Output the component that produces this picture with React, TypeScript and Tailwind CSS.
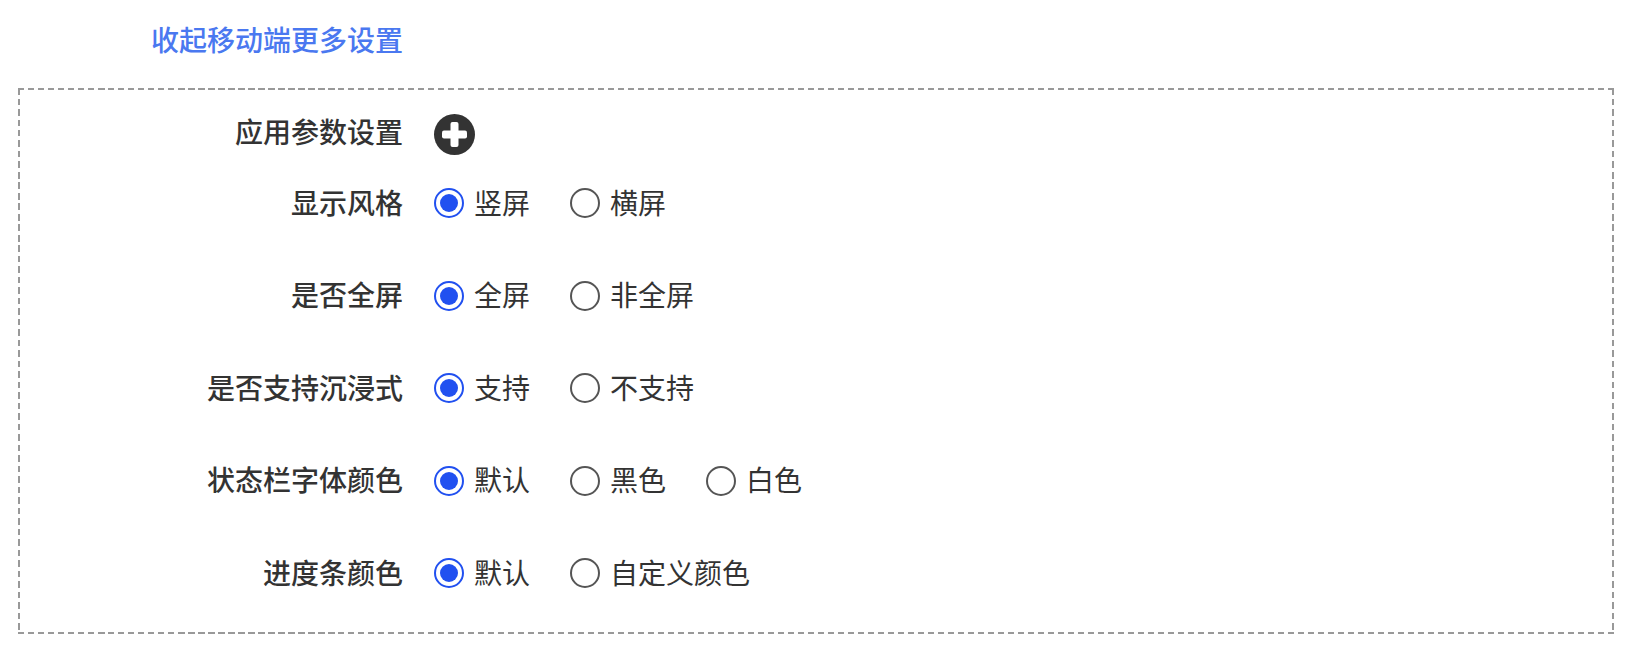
const rows = [
  { label: "显示风格", options: ["竖屏", "横屏"] },
  { label: "是否全屏", options: ["全屏", "非全屏"] },
  { label: "是否支持沉浸式", options: ["支持", "不支持"] },
  { label: "状态栏字体颜色", options: ["默认", "黑色", "白色"] },
  { label: "进度条颜色", options: ["默认", "自定义颜色"] },
];

function Radio({ checked, text }: { checked: boolean; text: string }) {
  return (
    <label className="mr-[40px] flex items-center gap-[10px] text-[#333]">
      <span
        className={
          checked
            ? "flex h-[30px] w-[30px] items-center justify-center rounded-full border-2 border-[#2150f0] bg-white"
            : "flex h-[30px] w-[30px] items-center justify-center rounded-full border-2 border-[#555] bg-white"
        }
      >
        {checked && <span className="h-[18px] w-[18px] rounded-full bg-[#2150f0]" />}
      </span>
      <span className="pb-[3px]">{text}</span>
    </label>
  );
}

export default function App() {
  return (
    <div
      className="h-[650px] w-[1632px] bg-white pt-[18px] text-[28px] leading-[42px]"
      style={{ fontFamily: '"Noto Sans CJK SC", "Noto Sans", sans-serif' }}
    >
      <div className="pl-[151px] font-medium text-[#4a78f0]">收起移动端更多设置</div>
      {/* dash pattern of the border is longer than what border-dashed gives */}
      <div className="ml-[18px] mt-[28px] h-[546px] w-[1596px] pl-[2px] pt-[23px] [background:repeating-linear-gradient(90deg,#999_0_6.5px,transparent_6.5px_10px)_top/100%_2px_no-repeat,repeating-linear-gradient(90deg,#999_0_6.5px,transparent_6.5px_10px)_bottom/100%_2px_no-repeat,repeating-linear-gradient(180deg,#999_0_6.5px,transparent_6.5px_10.5px)_left/2px_100%_no-repeat,repeating-linear-gradient(180deg,#999_0_6.5px,transparent_6.5px_10.5px)_right/2px_100%_no-repeat]">
        <div className="flex h-[42px] items-center">
          <div className="w-[383px] pb-[2px] text-right font-medium text-[#333]">应用参数设置</div>
          <svg viewBox="0 0 41 41" className="ml-[31px] mt-[5px] h-[41px] w-[41px]">
            <circle cx="20.5" cy="20.5" r="20.5" fill="#333" />
            <rect x="8" y="16.5" width="25" height="8" rx="2" fill="#fff" />
            <rect x="16.5" y="8" width="8" height="25" rx="2" fill="#fff" />
          </svg>
        </div>
        <div className="mt-[29px] flex flex-col gap-[50.6px]">
          {rows.map((row) => (
            <div key={row.label} className="flex h-[42px] items-center">
              <div className="w-[383px] pb-[3px] text-right font-medium text-[#333]">{row.label}</div>
              <div className="ml-[31px] flex items-center">
                {row.options.map((opt, i) => (
                  <Radio key={opt} checked={i === 0} text={opt} />
                ))}
              </div>
            </div>
          ))}
        </div>
      </div>
    </div>
  );
}
